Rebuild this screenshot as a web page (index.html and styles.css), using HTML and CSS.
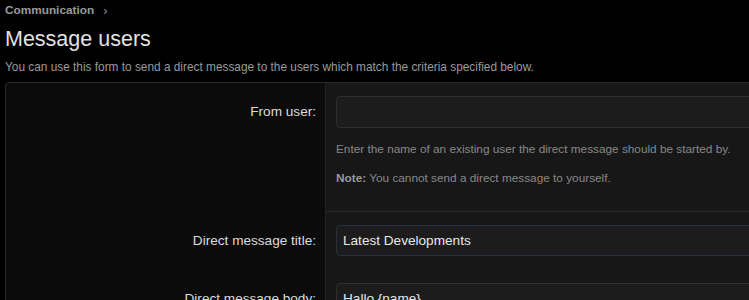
FILE: index.html
```html
<!doctype html>
<html lang="en">
<head>
  <meta charset="UTF-8">
  <title>Message users</title>
  <link rel="stylesheet" href="styles.css">
</head>
<body>
  <div class="page">
    <nav class="crumbs">
      <a href="#">Communication</a>
      <span class="crumb-sep">&#8250;</span>
    </nav>
    <h1 class="title">Message users</h1>
    <p class="intro">You can use this form to send a direct message to the users which match the criteria specified below.</p>

    <form class="panel">
      <div class="row row-split">
        <label class="row-label" for="from">From user:</label>
        <div class="row-field">
          <input class="input" id="from" type="text">
          <p class="hint">Enter the name of an existing user the direct message should be started by.</p>
          <p class="hint"><b>Note:</b> You cannot send a direct message to yourself.</p>
        </div>
      </div>
      <div class="row">
        <label class="row-label" for="subject">Direct message title:</label>
        <div class="row-field">
          <input class="input input-focus" id="subject" type="text" value="Latest Developments">
        </div>
      </div>
      <div class="row">
        <label class="row-label" for="body">Direct message body:</label>
        <div class="row-field">
          <textarea class="input textarea" id="body">Hallo {name},</textarea>
        </div>
      </div>
    </form>
  </div>
</body>
</html>
```

FILE: styles.css
```css
html, body {
  margin: 0;
  background: #000;
  overflow: hidden;
}
body {
  font-family: "Liberation Sans", Arial, sans-serif;
  color: #ddd;
}
.page {
  width: 1000px;
  padding: 0 5px;
}
.crumbs {
  display: flex;
  align-items: center;
  gap: 9px;
  height: 20px;
  font-size: 11.8px;
  font-weight: bold;
}
.crumbs a {
  color: #9a9a9a;
  text-decoration: none;
}
.crumb-sep {
  color: #8a8a8a;
  font-weight: normal;
  font-size: 13px;
}
.title {
  margin: 0;
  padding-top: 6px;
  font-size: 21.5px;
  font-weight: normal;
  line-height: 26px;
  color: #e2e2e2;
}
.intro {
  margin: 0;
  padding-top: 8px;
  font-size: 11.85px;
  line-height: 14px;
  color: #9a9a9a;
}
.panel {
  margin-top: 8px;
  border: 1px solid #2a2a2a;
  border-radius: 4px;
  background: #0b0b0b;
  overflow: hidden;
}
.row {
  display: grid;
  grid-template-columns: 319px 1fr;
}
.row-split .row-field {
  border-bottom: 1px solid #2b2b2b;
  padding-bottom: 26px;
}
.row-label {
  padding: 21px 9px 0 0;
  text-align: right;
  font-size: 13.6px;
  line-height: 16px;
  color: #dcdcdc;
}
.row-field {
  background: #171717;
  border-left: 1px solid #222;
  padding: 13px 10px 14px;
}
.input {
  display: block;
  box-sizing: border-box;
  width: 100%;
  height: 32px;
  margin: 0;
  padding: 0 6px;
  background: #1c1c1c;
  border: 1px solid #2e2e2e;
  border-radius: 4px;
  font-family: inherit;
  font-size: 13.6px;
  color: #e8e8e8;
}
.input-focus {
  height: 31px;
  border-color: #26313b;
}
.textarea {
  height: 90px;
  padding-top: 7px;
  resize: none;
}
.hint {
  margin: 14px 0 0;
  font-size: 11.8px;
  line-height: 14px;
  color: #888;
}
.hint + .hint {
  margin-top: 15px;
}
.hint b {
  color: #999;
}
```
